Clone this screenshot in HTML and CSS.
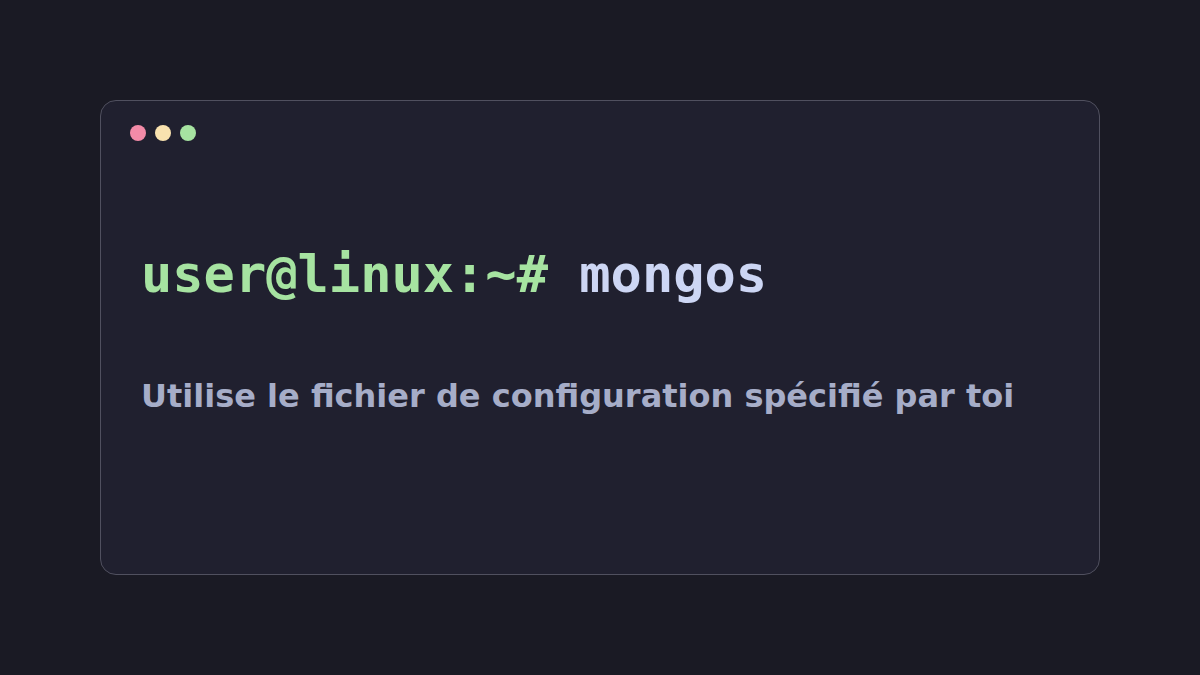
FILE: index.html
```html
<!DOCTYPE html>
<html lang="fr">
<head>
<meta charset="utf-8">
<link rel="stylesheet" href="styles.css">
</head>
<body>
<div class="page">
  <div class="window">
    <div class="titlebar">
      <span class="dot dot-red"></span>
      <span class="dot dot-yellow"></span>
      <span class="dot dot-green"></span>
    </div>
    <div class="content">
      <div class="command"><span class="prompt">user@linux:~#</span> <span class="cmd">mongos</span></div>
      <div class="desc">Utilise le fichier de configuration spécifié par toi</div>
    </div>
  </div>
</div>
</body>
</html>
```
FILE: styles.css
```css
html, body {
  margin: 0;
  padding: 0;
  background: #1a1a24;
}
.page {
  width: 1200px;
  height: 675px;
  box-sizing: border-box;
  padding: 100px;
}
.window {
  width: 1000px;
  height: 475px;
  box-sizing: border-box;
  background: #20202f;
  border: 1px solid #50505f;
  border-radius: 16px;
  display: flex;
  flex-direction: column;
}
.titlebar {
  display: flex;
  gap: 9px;
  padding: 24px 29px 0;
}
.dot {
  width: 16px;
  height: 16px;
  border-radius: 50%;
}
.dot-red { background: #f38ba8; }
.dot-yellow { background: #f9e2af; }
.dot-green { background: #a6e3a1; }
.content {
  padding: 0 40px;
}
.command {
  margin-top: 103px;
  font-family: "DejaVu Sans Mono", monospace;
  font-weight: bold;
  font-size: 52px;
  line-height: 60px;
  white-space: pre;
}
.prompt { color: #a6e3a1; }
.cmd { color: #cdd6f4; }
.desc {
  margin-top: 72px;
  font-family: "DejaVu Sans", sans-serif;
  font-weight: bold;
  font-size: 32px;
  line-height: 40px;
  color: #a6adc8;
}
```
